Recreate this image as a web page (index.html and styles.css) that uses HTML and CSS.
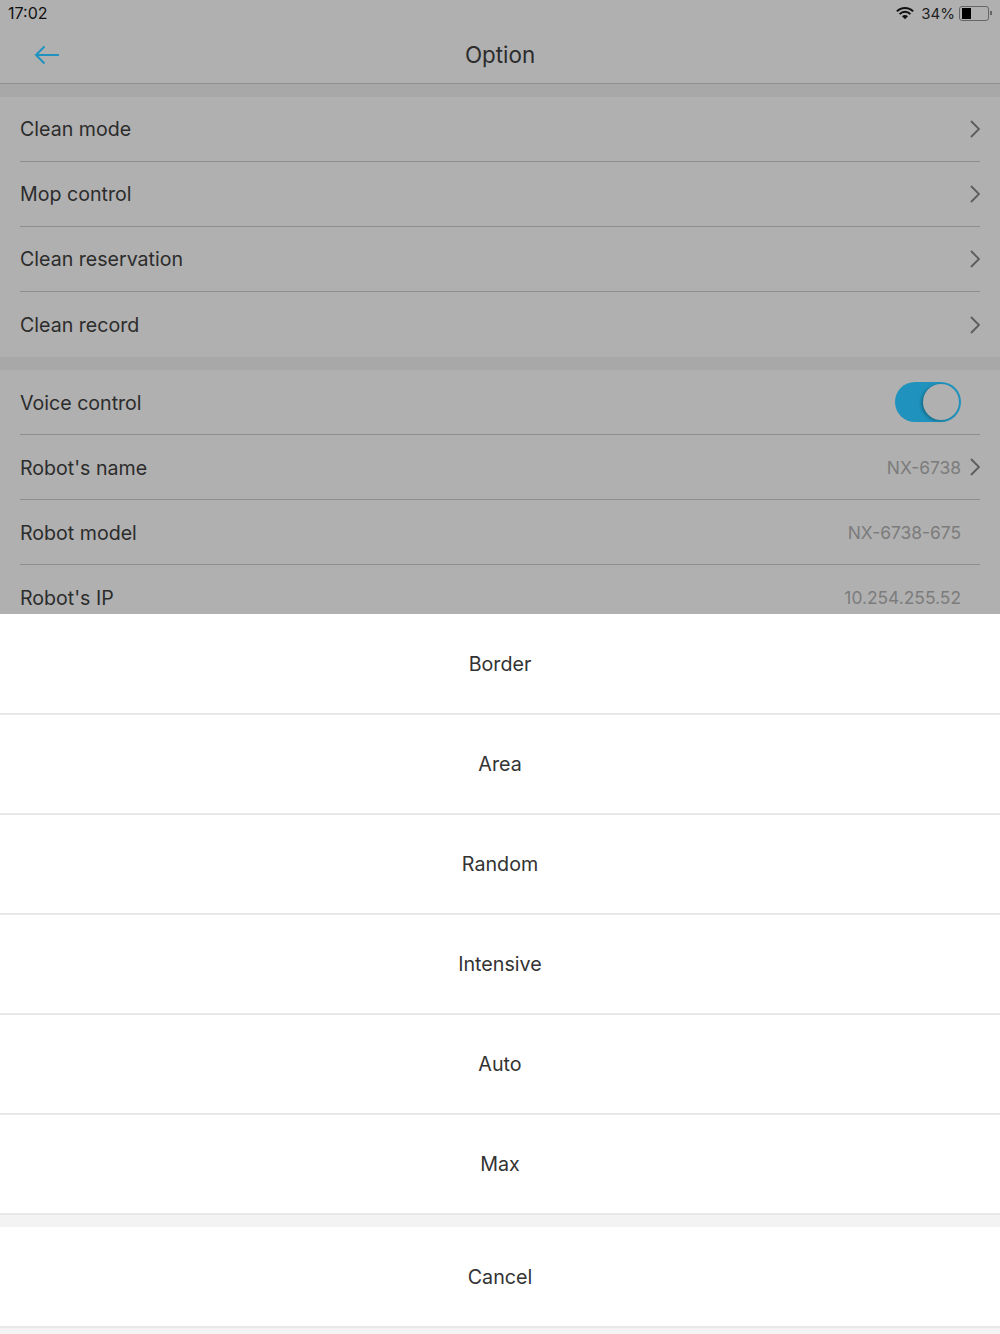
FILE: index.html
```html
<!DOCTYPE html>
<html lang="en">
<head>
  <meta charset="UTF-8">
  <title>Option</title>
  <link rel="stylesheet" href="styles.css">
</head>
<body>
  <div class="screen">
    <div class="behind">
      <div class="status">
        <span class="time">17:02</span>
        <div class="status-right">
          <svg class="wifi" width="18" height="14" viewBox="0 0 20 14">
            <path d="M1 5.200a12.600 12.600 0 0 1 18 0" fill="none" stroke="#111" stroke-width="2.200"/>
            <path d="M4 8.200a8.400 8.400 0 0 1 12 0" fill="none" stroke="#111" stroke-width="2.200"/>
            <path d="M10 14l-3.300-3.400a4.600 4.600 0 0 1 6.600 0z" fill="#111"/>
          </svg>
          <span class="pct">34%</span>
          <div class="battery"><div class="battery-fill"></div></div>
          <div class="battery-tip"></div>
        </div>
      </div>
      <div class="nav">
        <svg class="back" width="26" height="20" viewBox="0 0 26 20">
          <path d="M25 10H2M10.500 1.500L2 10l8.500 8.500" fill="none" stroke="#1f93bd" stroke-width="2"/>
        </svg>
        <h1 class="nav-title">Option</h1>
      </div>

      <div class="group">
        <div class="row"><span>Clean mode</span><div class="row-end"><svg class="chev" width="11" height="18" viewBox="0 0 11 18"><path d="M2 1l8 8-8 8" fill="none" stroke="#5c5c5c" stroke-width="1.800"/></svg></div></div>
        <div class="row"><span>Mop control</span><div class="row-end"><svg class="chev" width="11" height="18" viewBox="0 0 11 18"><path d="M2 1l8 8-8 8" fill="none" stroke="#5c5c5c" stroke-width="1.800"/></svg></div></div>
        <div class="row"><span>Clean reservation</span><div class="row-end"><svg class="chev" width="11" height="18" viewBox="0 0 11 18"><path d="M2 1l8 8-8 8" fill="none" stroke="#5c5c5c" stroke-width="1.800"/></svg></div></div>
        <div class="row last"><span>Clean record</span><div class="row-end"><svg class="chev" width="11" height="18" viewBox="0 0 11 18"><path d="M2 1l8 8-8 8" fill="none" stroke="#5c5c5c" stroke-width="1.800"/></svg></div></div>
      </div>

      <div class="group lower">
        <div class="row"><span>Voice control</span><div class="row-end plain"><div class="toggle"><div class="knob"></div></div></div></div>
        <div class="row"><span>Robot's name</span><div class="row-end"><span class="value">NX-6738</span><svg class="chev" width="11" height="18" viewBox="0 0 11 18"><path d="M2 1l8 8-8 8" fill="none" stroke="#5c5c5c" stroke-width="1.800"/></svg></div></div>
        <div class="row"><span>Robot model</span><div class="row-end plain"><span class="value">NX-6738-675</span></div></div>
        <div class="row"><span>Robot's IP</span><div class="row-end plain"><span class="value">10.254.255.52</span></div></div>
      </div>
    </div>

    <div class="sheet">
      <div class="sheet-item">Border</div>
      <div class="sheet-item">Area</div>
      <div class="sheet-item">Random</div>
      <div class="sheet-item">Intensive</div>
      <div class="sheet-item">Auto</div>
      <div class="sheet-item">Max</div>
      <div class="sheet-gap"></div>
      <div class="sheet-item">Cancel</div>
      <div class="sheet-gap"></div>
    </div>
  </div>
</body>
</html>
```

FILE: styles.css
```css
html, body {
  margin: 0;
  padding: 0;
  background-color: #fff;
}
.screen {
  width: 1000px;
  height: 1334px;
  overflow: hidden;
  font-family: Inter, 'Noto Sans', sans-serif;
  color: #2c2c2c;
}
.behind {
  height: 614px;
  overflow: hidden;
  background-color: #a8a8a8;
}
.status {
  height: 26px;
  padding: 0 8px;
  display: flex;
  justify-content: space-between;
  align-items: center;
  background-color: #b0b0b0;
}
.time {
  font-size: 16px;
  color: #111;
}
.status-right {
  display: flex;
  align-items: center;
}
.pct {
  font-size: 15px;
  color: #222;
  margin: 0 4px 0 7px;
}
.battery {
  width: 30px;
  height: 15px;
  box-sizing: border-box;
  border: 1px solid #666;
  border-radius: 3px;
  padding: 1px 2px;
}
.battery-fill {
  width: 9px;
  height: 11px;
  background-color: #000;
}
.battery-tip {
  width: 2px;
  height: 4px;
  margin: 0 0 0 1px;
  background-color: #666;
}
.nav {
  height: 57px;
  display: flex;
  align-items: center;
  justify-content: center;
  position: relative;
  background-color: #b0b0b0;
  border-bottom: 1px solid #8e8e8e;
  margin-bottom: 13px;
}
.back {
  position: absolute;
  left: 34px;
  top: 19px;
}
.nav-title {
  margin: 0;
  font-size: 22.400px;
  font-weight: 400;
  color: #2c2c2c;
}
.group {
  background-color: #b0b0b0;
  padding-left: 20px;
  padding-right: 20px;
  margin-bottom: 13px;
}
.row {
  height: 64px;
  display: flex;
  justify-content: space-between;
  align-items: center;
  font-size: 19.600px;
  border-bottom: 1px solid #8e8e8e;
}
.row.last {
  height: 65px;
  border-bottom: none;
}
.lower .row > span {
  margin-top: 2px;
}
.row-end {
  display: flex;
  align-items: center;
}
.row-end.plain {
  padding-right: 19px;
}
.chev {
  display: block;
  margin-left: 8px;
}
.value {
  font-size: 17.400px;
  color: #7c7c7c;
}
.toggle {
  width: 66px;
  height: 40px;
  box-sizing: border-box;
  border-radius: 20px;
  background-color: #1f93bd;
  padding: 2px;
  display: flex;
  justify-content: flex-end;
}
.knob {
  width: 36px;
  height: 36px;
  border-radius: 50%;
  background-color: #b0b0b0;
  box-shadow: -2px 1px 3px rgba(0, 0, 0, 0.25);
}
.sheet {
  background-color: #f3f3f3;
}
.sheet-item {
  height: 100px;
  box-sizing: border-box;
  display: flex;
  align-items: center;
  justify-content: center;
  background-color: #fff;
  border-top: 1px solid #e8e8e8;
  border-bottom: 1px solid #e8e8e8;
  font-size: 19.700px;
  color: #333;
}
.sheet-item:first-child,
.sheet-gap + .sheet-item {
  border-top-color: #fff;
}
.sheet-gap {
  height: 12px;
  border-top: 1px solid #e8e8e8;
}
```
